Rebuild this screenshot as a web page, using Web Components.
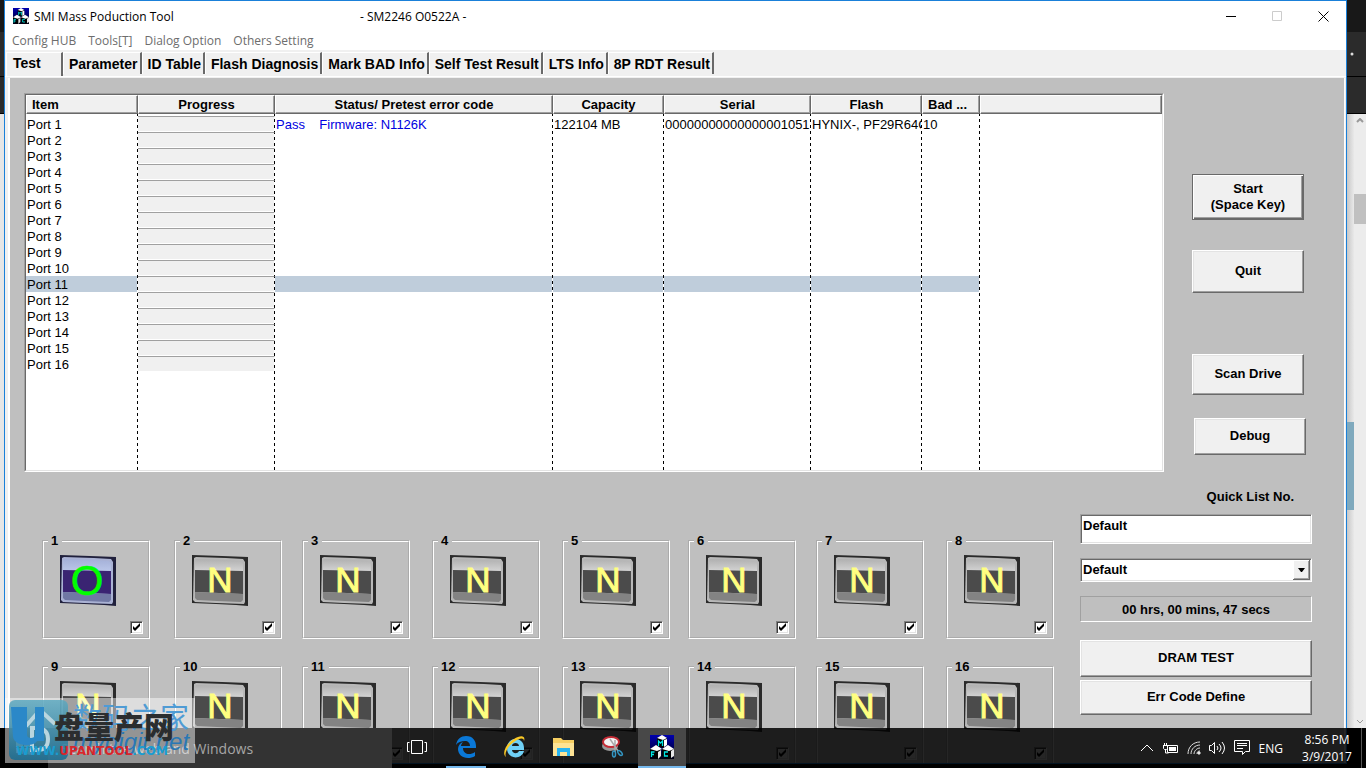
<!DOCTYPE html>
<html lang="en">
<head>
<meta charset="utf-8">
<title>SMI Mass Poduction Tool</title>
<style>
  html, body { margin: 0; height: 100%; overflow: hidden; }
  body { font-family: "Liberation Sans", Arial, sans-serif; font-size: 13px; color: #000; }
</style>
</head>
<body>
<desk-top></desk-top>
<script>
const define = (name, html, setup) => {
  const tpl = document.createElement('template');
  tpl.innerHTML = html;
  customElements.define(name, class extends HTMLElement {
    connectedCallback() {
      if (this.shadowRoot) return;
      const root = this.attachShadow({ mode: 'open' });
      root.append(tpl.content.cloneNode(true));
      if (setup) setup(this, root);
    }
  });
};

/* The three-cube application icon, used in the title bar and in the task bar */
define('mfc-icon', `
<style>:host{display:block;width:16px;height:16px}svg{display:block;width:100%;height:100%}</style>
<svg viewBox="0 0 24 24" aria-hidden="true">
  <defs><linearGradient id="g" x1="0" y1="0" x2="0" y2="1"><stop offset="0" stop-color="#0000b0"/><stop offset="1" stop-color="#000010"/></linearGradient></defs>
  <rect width="24" height="24" fill="url(#g)"/>
  <path d="M7 3l5-2 5 2v7l-4 3-6-2z" fill="#000"/><path d="M7 3l5-3 5 3-4 2z" fill="#fff"/><path d="M14 5l3-1v6l-3 2z" fill="#fff"/>
  <path d="M0 14l5-3 6 3v7l-4 3-7-3z" fill="#000"/><path d="M0 14l6-4 6 4-5 2z" fill="#fff"/><path d="M8 17l3-2v6l-3 3z" fill="#e8e8e8"/>
  <path d="M12 14l6-3 6 3v7l-5 3-7-3z" fill="#000"/><path d="M12 14l6-4 6 4-5 2z" fill="#fff"/><path d="M21 16l3-2v7l-3 2z" fill="#e8e8e8"/>
  <path d="M8.500 11v-5l2 2 2-2v5M1.500 22v-5h3M1.500 19.500h2.500M18 17h-3.500v4h3.500" fill="none" stroke="#00e5e5" stroke-width="1.300"/>
</svg>`);

define('title-bar', `
<style>
  :host{flex:none;display:flex;align-items:center;height:30px;padding:0 0 0 8px;background:#fff;font:12px "Open Sans","Noto Sans",sans-serif}
  h1{flex:0 0 326px;margin:0 0 0 5px;font:inherit}
  span{flex:1}
  button{width:46px;height:29px;padding:0;border:0;background:none;display:grid;place-items:center}
  svg{fill:none;stroke:#000}
</style>
<mfc-icon></mfc-icon><h1>SMI Mass Poduction Tool</h1><span>- SM2246 O0522A -</span>
<button aria-label="Minimize"><svg width="11" height="11"><path d="M0 5.500h10"/></svg></button>
<button aria-label="Maximize" disabled><svg width="11" height="11"><path d="M.5 .5h9v9h-9z" stroke="#ccc"/></svg></button>
<button aria-label="Close"><svg width="11" height="11"><path d="M.5 .5l10 10M10.500 .5l-10 10"/></svg></button>`);

define('menu-bar', `
<style>
  :host{flex:none;display:block;background:#fff;height:19px}
  nav{display:flex;gap:12px;padding-left:7px}
  a{color:#6d6d6d;text-decoration:none;font:12px/20px "Open Sans","Noto Sans",sans-serif}
</style>
<nav><a href="#hub">Config HUB</a><a href="#tools">Tools[T]</a><a href="#dialog">Dialog Option</a><a href="#others">Others Setting</a></nav>`);

define('tab-strip', `
<style>
  :host{flex:none;display:flex;align-items:flex-end;height:26px;background:#f0f0f0;padding-left:1px;border-bottom:1px solid #fff}
  button{box-sizing:border-box;height:22px;margin:0 0 2px;padding:0 2px 0 5px;background:#f0f0f0;border:1px solid #fff;border-bottom:0;border-right:2px solid #696969;font:bold 14px/18px "Liberation Sans",sans-serif;color:#000;text-align:left;white-space:nowrap}
  button[aria-selected=true]{width:57px;height:24px;padding:0 0 4px 6px;margin-bottom:0}
</style>
<button role="tab" aria-selected="true">Test</button><button role="tab">Parameter</button><button role="tab">ID Table</button><button role="tab">Flash Diagnosis</button><button role="tab">Mark BAD Info</button><button role="tab">Self Test Result</button><button role="tab">LTS Info</button><button role="tab">8P RDT Result</button>`);

define('port-table', `
<style>
  :host{display:block;box-sizing:border-box;height:379px;background:#fff;border:1px solid;border-color:#a0a0a0 #fff #fff #a0a0a0}
  div{box-sizing:border-box;height:100%;border:1px solid;border-color:#696969 #e3e3e3 #e3e3e3 #696969}
  table{width:100%;height:100%;table-layout:fixed;border-collapse:separate;border-spacing:0;font-size:13px}
  col.line{background:repeating-linear-gradient(#000 0 3px,transparent 3px 6px) right top/1px 100% no-repeat}
  th{box-sizing:border-box;height:19px;padding:0 5px;background:#f0f0f0;border:1px solid;border-color:#fff #696969 #696969 #fff;box-shadow:inset -1px -1px #a0a0a0;font:bold 13px/16px "Liberation Sans",sans-serif;text-align:center;white-space:nowrap}
  th.left{text-align:left}
  td{box-sizing:border-box;height:16px;padding:0 0 0 1px;line-height:15px;white-space:nowrap;overflow:hidden;border-right:1px solid transparent;background-clip:padding-box}
  tr.gap td{height:2px;line-height:0}
  tr.rest td{height:auto}
  tr.sel td{background-color:#bfcddb}
  tr.sel td:last-child{background:none}
  td.bar,tr.sel td.bar{background-color:#f0f0f0;border-top:1px solid #a0a0a0;box-shadow:inset 0 -1px #fff}
  td.blue{color:#0000e0;white-space:pre}
</style>
<div><table>
  <colgroup><col class="line" style="width:112px"><col class="line" style="width:137px"><col class="line" style="width:278px"><col class="line" style="width:111px"><col class="line" style="width:147px"><col class="line" style="width:111px"><col class="line" style="width:58px"><col></colgroup>
  <thead><tr><th class="left">Item</th><th>Progress</th><th>Status/ Pretest error code</th><th>Capacity</th><th>Serial</th><th>Flash</th><th class="left">Bad ...</th><th></th></tr></thead>
  <tbody></tbody>
</table></div>`, (host, root) => {
  const body = root.querySelector('tbody');
  const add = (cells, cls) => {
    const tr = body.insertRow();
    if (cls) tr.className = cls;
    for (let i = 0; i < 8; i++) tr.insertCell().textContent = cells[i] || '';
    return tr;
  };
  add([], 'gap');
  for (let n = 1; n <= 16; n++) {
    const tr = add(n === 1
      ? ['Port 1', '', 'Pass    Firmware: N1126K', '122104 MB', '00000000000000001051', 'HYNIX-, PF29R64C', '10']
      : ['Port ' + n], n === 11 ? 'sel' : '');
    tr.cells[1].className = 'bar';
    tr.cells[2].className = 'blue';
  }
  add([], 'rest');
});

define('push-button', `
<style>
  :host{display:block}
  button{box-sizing:border-box;width:100%;height:100%;padding:0 0 1px;background:#f0f0f0;border:1px solid;border-color:#fff #696969 #696969 #fff;box-shadow:inset -1px -1px #a0a0a0,inset 1px 1px #e3e3e3;font:bold 13px/16px "Liberation Sans",sans-serif;color:#000}
  :host([default]) button{border-color:#696969;box-shadow:inset 1px 1px #fff,inset -1px -1px #696969,inset -2px -2px #a0a0a0}
</style><button><slot></slot></button>`);

define('action-column', `
<style>
  :host{display:flex;flex-direction:column;width:112px;padding-top:81px}
  .b1{height:46px}.b2{height:43px;margin-top:30px}.b3{height:41px;margin-top:61px}.b4{height:37px;margin:23px -2px 0 2px}
</style>
<push-button default class="b1">Start<br>(Space Key)</push-button><push-button class="b2">Quit</push-button>
<push-button class="b3">Scan Drive</push-button><push-button class="b4">Debug</push-button>`);

define('port-card', `
<style>
  :host{display:block;width:108px}
  fieldset{box-sizing:border-box;width:108px;height:106px;margin:0;padding:6px 5px 0 16px;border:2px groove #fff;min-width:0}
  legend{margin-left:-12px;padding:0 4px 0 3px;font:bold 13px/16px "Liberation Sans",sans-serif}
  svg{display:block;width:56px;height:52px}
  text{font-family:"Liberation Sans",sans-serif;text-anchor:middle}
  input{appearance:none;box-sizing:border-box;display:block;width:13px;height:13px;margin:14px 0 0 70px;border:1px solid;border-color:#808080 #fff #fff #808080;box-shadow:inset 1px 1px #404040,inset -1px -1px #e3e3e3;
    background:#fff url('data:image/svg+xml,<svg xmlns="http://www.w3.org/2000/svg" width="11" height="11"><path d="M2 4v3l2 2 5-5v-3l-5 5z"/></svg>')}
</style>
<fieldset><legend></legend>
<svg viewBox="0 0 56 52" aria-hidden="true">
  <defs><linearGradient id="t" x1="0" y1="0" x2="0" y2="1"><stop class="a" offset="0"/><stop class="b" offset="1"/></linearGradient></defs>
  <path class="edge" d="M0 0l30 1 26 1v49l-12-1-20-1-24-1z"/>
  <path class="rim" d="M2 3l2-1 30 1 17 1 2 3v40l-1 2-28-1-21-1-2-2z"/>
  <path d="M4 4l30 1 15 1 2 3v8H3V6z" fill="url(#t)"/>
  <path class="mid" d="M3 15l48 1v23L3 37z"/>
  <path class="low" d="M3 37l48 2v6l-2 2-24-1-20-1-2-2z"/>
  <text></text>
</svg><input type="checkbox" checked></fieldset>`, (host, root) => {
  const n = host.getAttribute('n'), on = n === '1';
  root.querySelector('legend').textContent = n;
  root.querySelector('input').setAttribute('aria-label', 'Port ' + n);
  const c = on ? { a: '#a4b0d8', b: '#bcc8ea', edge: '#20203c', rim: '#aab2d4', mid: '#3a2472', low: '#7078a4' }
               : { a: '#b0b0b0', b: '#d6d6d6', edge: '#2a2a2a', rim: '#b8b8b8', mid: '#4b4b4b', low: '#838383' };
  root.querySelector('.a').setAttribute('stop-color', c.a);
  root.querySelector('.b').setAttribute('stop-color', c.b);
  for (const k of ['edge', 'rim', 'mid', 'low']) root.querySelector('.' + k).setAttribute('fill', c[k]);
  const t = root.querySelector('text');
  t.textContent = on ? 'O' : 'N';
  const attrs = on ? { x: 27, y: 40, 'font-size': 42, fill: '#0f0', stroke: '#0f0', 'stroke-width': .5 }
                   : { x: 28, y: 37, 'font-size': 35, fill: '#ffff80', stroke: '#ffff80', 'stroke-width': 1 };
  for (const k in attrs) t.setAttribute(k, attrs[k]);
});

define('port-grid', `
<style>
  :host{display:grid;grid-template-columns:132fr 128fr 130fr 130fr 126fr 128fr 130fr 108fr;row-gap:20px;align-content:start}
</style>`, (host, root) => {
  for (let n = 1; n <= 16; n++) {
    const c = document.createElement('port-card');
    c.setAttribute('n', n);
    root.append(c);
  }
});

define('list-panel', `
<style>
  :host{display:flex;flex-direction:column;width:232px;font:bold 13px/16px "Liberation Sans",sans-serif}
  label{margin:0 18px 0 0;text-align:right;line-height:18px}
  input,select{box-sizing:border-box;width:100%;border:1px solid;border-color:#a0a0a0 #fff #fff #a0a0a0;box-shadow:inset 1px 1px #696969,inset -1px -1px #e3e3e3;border-radius:0;background:#fff;font:inherit;color:#000}
  input{height:30px;margin-top:8px;padding:0 2px 7px 2px}
  .combo{position:relative;margin-top:14px;height:24px}
  select{appearance:none;height:24px;padding:0 20px 1px 2px}
  .combo svg{position:absolute;right:2px;top:2px;pointer-events:none}
  output{box-sizing:border-box;height:26px;margin-top:14px;border:1px solid;border-color:#a0a0a0 #fff #fff #a0a0a0;text-align:center;line-height:25px}
  .b1{height:37px;margin-top:18px}.b2{height:35px;margin-top:3px}
</style>
<label for="q">Quick List No.</label><input id="q" value="Default">
<div class="combo"><select aria-label="Quick list"><option>Default</option></select>
<svg width="17" height="20" aria-hidden="true"><path d="M0 0h17v20H0z" fill="#696969"/><path d="M0 0h16v19H0z" fill="#fff"/><path d="M1 1h15v18H1z" fill="#a0a0a0"/><path d="M1 1h14v17H1z" fill="#f0f0f0"/><path d="M5 8h7l-3 4h-1z"/></svg></div>
<output>00 hrs, 00 mins, 47 secs</output>
<push-button class="b1">DRAM TEST</push-button><push-button class="b2">Err Code Define</push-button>`);

define('tool-window', `
<style>
  :host{display:flex;flex-direction:column;box-sizing:border-box;border:1px solid #1a80d9;background:#f0f0f0;overflow:hidden}
  main{flex:1;min-height:0;margin:1px 1px 0 3px;border-left:2px solid #fff;border-right:1px solid #fff;background:#bfbfbf}
  .top{display:flex;gap:28px;padding:15px 40px 0 14px}
  .top port-table{flex:1}
  .bottom{display:flex;gap:26px;padding:16px 32px 0 32px}
  port-grid{flex:1;margin-top:45px}
</style>
<title-bar></title-bar><menu-bar></menu-bar><tab-strip></tab-strip>
<main><div class="top"><port-table></port-table><action-column></action-column></div>
<div class="bottom"><port-grid></port-grid><list-panel></list-panel></div></main>`);

define('task-bar', `
<style>
  :host{display:flex;height:40px;background:rgba(0,0,0,.85);color:#fff;font-family:"Open Sans","Noto Sans",sans-serif}
  button{box-sizing:border-box;width:49px;padding:0;border:0;border-bottom:2px solid transparent;background:none;display:grid;place-items:center}
  .start{width:48px;background:#000}
  .find{box-sizing:border-box;width:344px;height:40px;padding:0 13px;border:0;background:#333;font:14px "Open Sans",sans-serif;border-radius:0}
  .find::placeholder{color:#a6a6a6;opacity:1}
  .edge{width:40px;margin:0 4px 0 5px;border-color:#76b9ed}
  .mfc{width:48px;margin-left:1px;background:#484848;border-color:#76b9ed}
  .mfc mfc-icon{width:24px;height:24px}
  .tray{margin-left:auto;display:flex;align-items:center;gap:8px;font-size:12px}
  .tray svg{display:block}
  time{width:52px;margin-left:10px;text-align:center;line-height:17px;white-space:nowrap}
  .show{width:4px;height:40px;border-left:1px solid #555}
</style>
<button class="start" aria-label="Start"><svg width="16" height="16" fill="#fff"><path d="M0 2l7-1v7H0zM8 1l8-1v8H8zM0 9h7v6l-7-1zM8 9h8v7l-8-1z"/></svg></button>
<input class="find" placeholder="Search the web and Windows" aria-label="Search">
<button aria-label="Task view"><svg width="20" height="14" fill="none" stroke="#fff"><path d="M4.500 .5h11v13h-11zM2.500 2.500h-2v9h2M17.500 2.500h2v9h-2"/></svg></button>
<button class="edge" aria-label="Edge"><svg width="20" height="22" fill="#0a78d7"><path d="M0 9C1 3 5 0 10 0c7 0 10 5 10 10v2H7c0 4 3 6 6 6 2 0 4-.5 6-2v4c-2 1.500-5 2-7 2-6 0-10-4-10-9 0-3 2-6 5-7-1 1-2 3-2 4h9c0-3-2-5-5-5C5 5 2 6 0 9z"/></svg></button>
<button aria-label="Internet Explorer"><svg width="24" height="24"><path d="M12 4c5 0 9 3 9 9v2H9c0 3 5 5 7 1h5c-2 9-17 9-17-3 0-5 4-9 8-9zM9 11h7c0-4-7-4-7 0z" fill="#6fd0f6"/><path d="M3 22c-5-4 1-14 8-18 6-4 12-4 10 2 0-4-5-3-10 1C5 11 1 18 3 22z" fill="#fbc926"/></svg></button>
<button aria-label="File Explorer"><svg width="22" height="20"><path d="M0 1h8l2 2h11v16H0z" fill="#f6cf62"/><path d="M0 6h21v13H0z" fill="#fde394"/><path d="M4 11h13v8h-3v-4H7v4H4z" fill="#28b4f0"/></svg></button>
<button aria-label="Snipping Tool"><svg width="22" height="22" fill="none"><ellipse cx="8" cy="10" rx="8" ry="5" fill="#999"/><ellipse cx="9" cy="6" rx="8" ry="5" fill="#f4f4f4" stroke="#c42c36" stroke-width="2"/><path d="M8 3l8 12M13 4l0 12" stroke="#aaa" stroke-width="1.500"/><ellipse cx="12" cy="18" rx="1.500" ry="3" stroke="#3497c4" stroke-width="1.500"/><ellipse cx="18" cy="17" rx="1.500" ry="3" stroke="#3497c4" stroke-width="1.500" transform="rotate(-40 18 17)"/></svg></button>
<button class="mfc" aria-label="SMI Mass Poduction Tool"><mfc-icon></mfc-icon></button>
<div class="tray">
<svg width="14" height="8" fill="none" stroke="#fff"><path d="M1 7l6-6 6 6"/></svg>
<svg width="17" height="12" fill="none" stroke="#fff"><path d="M5.500 3.500h10v7h-10zM1 3.500h5M1.500 3.500v3l1 1h2l1-1v-3M2.500 1v2M4.500 1v2M3.500 7v4h3"/><path d="M7 5h7v4H7z" fill="#fff" stroke="none"/></svg>
<svg width="14" height="14" fill="none" stroke="#ddd"><path d="M1 13C1 6 6 1 13 1M4 13c0-5 4-9 9-9M7 13c0-3 3-6 6-6M10 13c0-2 1-3 3-3"/><path d="M11 11h2v2h-2z" fill="#fff"/></svg>
<svg width="17" height="14" fill="none" stroke="#fff"><path d="M.5 4.500h2l3-3v11l-3-3h-2zM8 5q2 2 0 4M10 3q4 4 0 8M13 1q5 6 0 12"/></svg>
<svg width="17" height="16" fill="none" stroke="#fff"><path d="M.5 .5h15v11h-4l-3 3v-3h-8zM3 3.500h10M3 5.500h10M3 8.500h6"/></svg>
<span>ENG</span><time>8:56 PM<br>3/9/2017</time><div class="show"></div></div>`);

define('site-stamp', `
<style>
  :host{display:block;width:190px;height:65px;background:rgba(255,255,255,.48);white-space:nowrap}
  svg,span{position:absolute}
  svg{left:4px;top:2px}
  .a{left:68px;top:0;font:29px/36px "Noto Sans CJK SC",sans-serif;color:#4f9bd4}
  .b{left:49px;top:9px;font:900 30px/36px "Noto Sans CJK SC",sans-serif;color:#2b2d2f}
  .c{left:68px;top:30px;font:italic 24px/28px "Liberation Sans",sans-serif;color:#2a78b4}
  .d{left:11px;top:44px;font:bold 12px/18px "DejaVu Sans",sans-serif;color:#1a9cd0}
  .d b{color:#d8262c}
</style>
<svg width="60" height="61" aria-hidden="true"><defs><linearGradient id="s" x1="0" y1="0" x2="0" y2="1"><stop offset="0" stop-color="#5da9c0"/><stop offset="1" stop-color="#176c92"/></linearGradient></defs>
<rect width="59" height="60" rx="6" fill="url(#s)" opacity=".85"/><path d="M17 26L31 10 46 24M23 28v22h5c9 0 11-5 11-11s-3-11-11-11z" fill="none" stroke="#b9d5df" stroke-width="4"/><path d="M2 7h16v28c0 4 8 4 8 0V7h9v34H28c-3 6-22 6-24-4z" fill="#2b88c8"/></svg>
<span class="a">数码之家</span><span class="c">mydigit.net</span><span class="b">盘量产网</span><span class="d">WWW.<b>UPANTOOL</b>.COM</span>`);

/* Visible edges of the browser window that lies behind the tool */
define('back-strip', `
<style>
  :host{display:flex;flex-direction:column;background:#e6e6e6}
  .h1{height:32px;background:#181818}.h2{height:44px;background:#2b2b2b;border-bottom:1px solid #000}.h3{height:36px;background:#2b2b2b;border-bottom:1px solid #000}
  .h2 svg{display:block;margin:20px 0 0 3px}
  .body{flex:1;display:flex;min-height:0}
  .gutter{width:7px;background:linear-gradient(90deg,#c8c8c8,#e9e9e9)}
  .tag{height:88px;margin-top:308px;background:#7fa9bd}
  .scroll{display:flex;flex-direction:column;align-items:center;flex:1;background:#ececec}
  .scroll svg{flex:none;margin:4px 0}
  .thumb{width:100%;height:30px;margin:67px 0 auto;background:#c0c0c0}
  :host([side=left]) .gutter,:host([side=left]) .scroll,:host([side=left]) .h2 svg{display:none}
  .end{height:40px;background:#000}
</style>
<div class="h1"></div><div class="h2"><svg width="4" height="4"><circle cx="2" cy="2" r="1.500" fill="#ddd"/></svg></div><div class="h3"></div>
<div class="body"><div class="gutter"><div class="tag"></div></div><div class="scroll"><svg width="8" height="5" fill="none" stroke="#999" stroke-width="2"><path d="M1 4l3-3 3 3"/></svg><div class="thumb"></div><svg width="8" height="5" fill="none" stroke="#999"><path d="M1 1l3 3 3-3"/></svg></div></div>
<div class="end"></div>`);

define('desk-top', `
<style>
  :host{position:relative;display:flex;height:100vh;overflow:hidden;background:#000}
  back-strip[side=left]{width:4px}
  back-strip[side=right]{width:19px}
  tool-window{flex:1;min-width:0;margin-bottom:4px}
  task-bar{position:absolute;left:0;right:0;bottom:0}
  site-stamp{position:absolute;left:5px;bottom:5px}
</style>
<back-strip side="left"></back-strip><tool-window></tool-window><back-strip side="right"></back-strip>
<task-bar></task-bar><site-stamp></site-stamp>`);
</script>
</body>
</html>
